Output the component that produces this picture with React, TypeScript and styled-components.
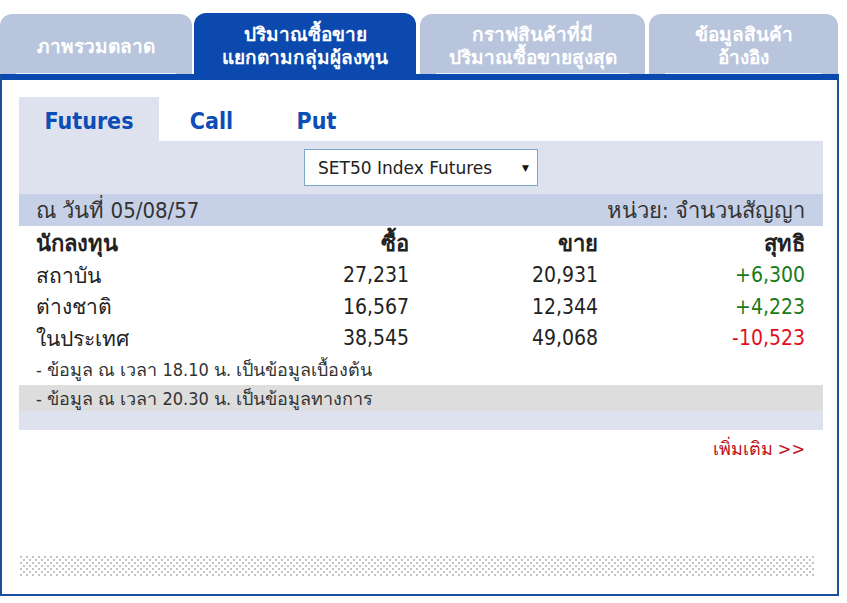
import React, { useState } from "react";
import styled, { createGlobalStyle } from "styled-components";

const GlobalStyle = createGlobalStyle`
  body {
    margin: 0;
    background: #ffffff;
    font-family: Tahoma, "DejaVu Sans Condensed", "DejaVu Sans", sans-serif;
  }
`;

const Wrapper = styled.div`
  width: 839px;
  padding-top: 13px;
`;

const TabBar = styled.div`
  display: flex;
  align-items: flex-end;
  height: 61px;
`;

const MainTab = styled.div<{ $active?: boolean; $width: number; $gap: number }>`
  position: relative;
  width: ${(p) => p.$width}px;
  margin-right: ${(p) => p.$gap}px;
  height: ${(p) => (p.$active ? 61 : 60)}px;
  box-sizing: border-box;
  border-radius: 12px 12px 0 0;
  background: ${(p) => (p.$active ? "#0b49ae" : "#b9c5dd")};
  color: #ffffff;
  font-weight: bold;
  font-size: 19px;
  line-height: 23px;
  display: flex;
  align-items: center;
  justify-content: center;
  text-align: center;
  padding-top: ${(p) => (p.$active ? 5 : 4)}px;

  &::after {
    content: "";
    display: ${(p) => (p.$active ? "none" : "block")};
    position: absolute;
    left: 16px;
    right: 16px;
    bottom: 0;
    height: 1px;
    background: #eef2fa;
  }
`;

const Panel = styled.div`
  border-top: 6px solid #0b49ae;
  border-left: 2px solid #1a4f9c;
  border-right: 2px solid #1a4f9c;
  border-bottom: 2px solid #1a4f9c;
  height: 522px;
  box-sizing: border-box;
  padding: 17px 14px 0 17px;
  display: flex;
  flex-direction: column;
`;

const SubTabs = styled.div`
  display: flex;
  height: 44px;
`;

const SubTab = styled.div<{ $active?: boolean; $width: number }>`
  width: ${(p) => p.$width}px;
  display: flex;
  align-items: center;
  justify-content: center;
  padding-top: 3px;
  box-sizing: border-box;
  background: ${(p) => (p.$active ? "#dde2ee" : "transparent")};
  color: #0d4db5;
  font-weight: bold;
  font-size: 23px;
  cursor: pointer;
`;

const SelectRow = styled.div`
  height: 53px;
  background: #dde2ee;
  display: flex;
  align-items: center;
  justify-content: center;
`;

const SelectBox = styled.div`
  width: 234px;
  height: 37px;
  box-sizing: border-box;
  border: 1px solid #7ea7cc;
  background: #ffffff;
  display: flex;
  align-items: center;
  justify-content: space-between;
  padding: 0 8px 0 13px;
  font-family: "DejaVu Sans", sans-serif;
  font-size: 17px;
  color: #222222;
`;

const Arrow = styled.span`
  font-size: 9px;
  color: #111111;
`;

const DateRow = styled.div`
  height: 32px;
  background: #c6d0e6;
  display: flex;
  align-items: center;
  justify-content: space-between;
  padding: 0 18px 0 17px;
  font-size: 22px;
  color: #333333;
`;

const Table = styled.div`
  display: grid;
  grid-template-columns: 200px 173px 189px 207px;
  padding: 2px 18px 0 17px;
`;

const Cell = styled.div<{ $head?: boolean; $right?: boolean; $color?: string }>`
  height: 31.5px;
  display: flex;
  align-items: center;
  justify-content: ${(p) => (p.$right ? "flex-end" : "flex-start")};
  font-size: ${(p) => (p.$head ? 22 : 21)}px;
  font-weight: ${(p) => (p.$head ? "bold" : "normal")};
  color: ${(p) => p.$color || "#222222"};
`;

const Note = styled.div<{ $grey?: boolean }>`
  height: ${(p) => (p.$grey ? 26 : 31)}px;
  display: flex;
  align-items: center;
  padding-left: 17px;
  font-size: 18px;
  color: #333333;
  background: ${(p) => (p.$grey ? "#dddddd" : "transparent")};
`;

const NoteStrip = styled.div`
  height: 19px;
  background: #dde2ee;
`;

const MoreRow = styled.div`
  display: flex;
  justify-content: flex-end;
  padding: 4px 18px 0 0;
`;

const MoreLink = styled.a`
  color: #c0101c;
  font-size: 18px;
  text-decoration: none;
  cursor: pointer;
`;

const Dotted = styled.div`
  margin-top: auto;
  margin-bottom: 18px;
  margin-left: 1px;
  width: 795px;
  height: 20px;
  background-color: #ffffff;
  background-image: radial-gradient(#c4c4c4 0.9px, transparent 1.1px),
    radial-gradient(#c4c4c4 0.9px, transparent 1.1px);
  background-size: 6px 6px;
  background-position: 1px 1px, 4px 4px;
`;

const mainTabs = [
  { label: ["ภาพรวมตลาด"], width: 192, gap: 2 },
  { label: ["ปริมาณซื้อขาย", "แยกตามกลุ่มผู้ลงทุน"], width: 222, gap: 4, active: true },
  { label: ["กราฟสินค้าที่มี", "ปริมาณซื้อขายสูงสุด"], width: 225, gap: 4 },
  { label: ["ข้อมูลสินค้า", "อ้างอิง"], width: 189, gap: 0 },
];

const rows = [
  { name: "สถาบัน", buy: "27,231", sell: "20,931", net: "+6,300", color: "#1a7a1a" },
  { name: "ต่างชาติ", buy: "16,567", sell: "12,344", net: "+4,223", color: "#1a7a1a" },
  { name: "ในประเทศ", buy: "38,545", sell: "49,068", net: "-10,523", color: "#e0101c" },
];

export default function App() {
  const [sub, setSub] = useState("Futures");

  return (
    <Wrapper>
      <GlobalStyle />
      <TabBar>
        {mainTabs.map((t, i) => (
          <MainTab key={i} $active={t.active} $width={t.width} $gap={t.gap}>
            <div>
              {t.label.map((l) => (
                <div key={l}>{l}</div>
              ))}
            </div>
          </MainTab>
        ))}
      </TabBar>
      <Panel>
        <SubTabs>
          {[
            { name: "Futures", width: 140 },
            { name: "Call", width: 105 },
            { name: "Put", width: 105 },
          ].map((s) => (
            <SubTab
              key={s.name}
              $width={s.width}
              $active={sub === s.name}
              onClick={() => setSub(s.name)}
            >
              {s.name}
            </SubTab>
          ))}
        </SubTabs>
        <SelectRow>
          <SelectBox>
            <span>SET50 Index Futures</span>
            <Arrow>▼</Arrow>
          </SelectBox>
        </SelectRow>
        <DateRow>
          <span>ณ วันที่ 05/08/57</span>
          <span>หน่วย: จำนวนสัญญา</span>
        </DateRow>
        <Table>
          <Cell $head>นักลงทุน</Cell>
          <Cell $head $right>ซื้อ</Cell>
          <Cell $head $right>ขาย</Cell>
          <Cell $head $right>สุทธิ</Cell>
          {rows.map((r) => (
            <React.Fragment key={r.name}>
              <Cell>{r.name}</Cell>
              <Cell $right>{r.buy}</Cell>
              <Cell $right>{r.sell}</Cell>
              <Cell $right $color={r.color}>{r.net}</Cell>
            </React.Fragment>
          ))}
        </Table>
        <Note>- ข้อมูล ณ เวลา 18.10 น. เป็นข้อมูลเบื้องต้น</Note>
        <Note $grey>- ข้อมูล ณ เวลา 20.30 น. เป็นข้อมูลทางการ</Note>
        <NoteStrip />
        <MoreRow>
          <MoreLink>เพิ่มเติม &gt;&gt;</MoreLink>
        </MoreRow>
        <Dotted />
      </Panel>
    </Wrapper>
  );
}
